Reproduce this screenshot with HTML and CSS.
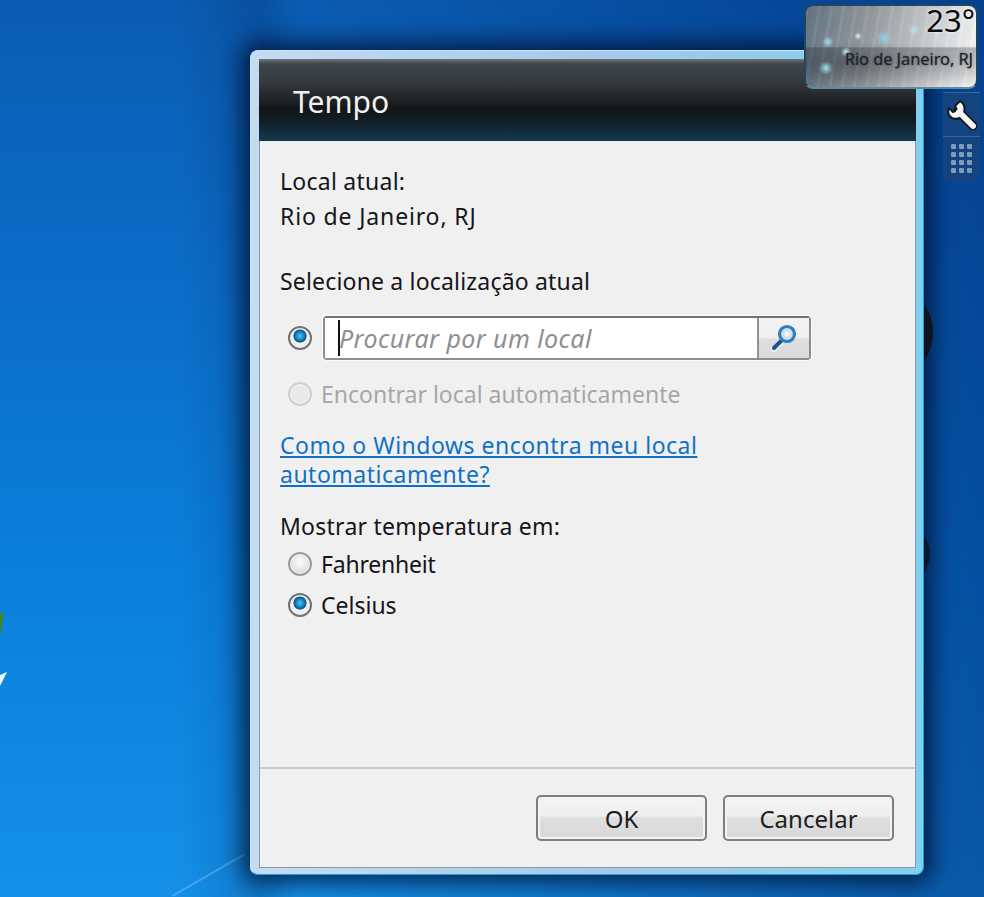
FILE: index.html
```html
<!DOCTYPE html>
<html lang="pt-BR">
<head>
<meta charset="utf-8">
<title>Tempo</title>
<link rel="stylesheet" href="styles.css">
</head>
<body>
<main class="desktop">
  <div class="streak"></div>
  <svg class="logo-bits" width="12" height="90" viewBox="0 0 12 90">
    <path d="M0 8 L4 2 L1 24 L0 26Z" fill="#3f8a12"/>
    <path d="M0 67 L7 64 L0 78Z" fill="#f4fafe"/>
  </svg>
  <div class="orb orb-a"></div>
  <div class="orb orb-b"></div>

  <section class="dialog">
    <div class="dialog-inner">
      <header class="dialog-head"><h1 class="dialog-title">Tempo</h1></header>
      <div class="dialog-body">
        <p class="line line-current">Local atual:</p>
        <p class="line line-city">Rio de Janeiro, RJ</p>
        <p class="line line-select">Selecione a localização atual</p>
        <div class="search-row">
          <span class="radio radio-on"></span>
          <div class="search">
            <div class="search-field"><span class="caret"></span><span class="placeholder">Procurar por um local</span></div>
            <div class="search-btn">
              <svg width="30" height="30" viewBox="0 0 30 30">
                <path d="M5 26 L13 18" stroke="#fff" stroke-width="6" stroke-linecap="round" opacity=".7"/>
                <path d="M5 25 L13 17" stroke="#1d4f93" stroke-width="4" stroke-linecap="round"/>
                <circle cx="18" cy="11" r="7.5" fill="#d5dfe8" stroke="#2f7fc0" stroke-width="3.2"/>
                <circle cx="18" cy="11" r="2.5" fill="#f3f6f9"/>
              </svg>
            </div>
          </div>
        </div>
        <div class="option option-auto"><span class="radio radio-off"></span><span class="label-off">Encontrar local automaticamente</span></div>
        <a class="help" href="#">Como o Windows encontra meu local<br>automaticamente?</a>
        <p class="line line-temp">Mostrar temperatura em:</p>
        <div class="option option-f"><span class="radio"></span><span class="label-f">Fahrenheit</span></div>
        <div class="option option-c"><span class="radio radio-on"></span><span>Celsius</span></div>
      </div>
      <footer class="dialog-foot">
        <button class="btn" type="button">OK</button>
        <button class="btn" type="button">Cancelar</button>
      </footer>
    </div>
  </section>

  <aside class="gadget">
    <div class="gadget-dots"></div>
    <div class="gadget-temp">23°</div>
    <div class="gadget-city">Rio de Janeiro, RJ</div>
  </aside>

  <aside class="tools">
    <div class="tool tool-wrench">
      <svg width="32" height="32" viewBox="0 0 32 32">
        <path d="M12 12 L27 27" stroke="#15181c" stroke-width="9" stroke-linecap="round"/>
        <path d="M14 2 L9 7 L11 11 L7 13 L3 9 C0 16 6 22 14 19 C20 15 20 5 14 2Z" fill="#f5f5f5" stroke="#15181c" stroke-width="2" stroke-linejoin="round"/>
        <path d="M13 13 L27 27" stroke="#f5f5f5" stroke-width="6" stroke-linecap="round"/>
      </svg>
    </div>
    <div class="tool tool-grid">
      <span></span><span></span><span></span>
      <span></span><span></span><span></span>
      <span></span><span></span><span></span>
      <span></span><span></span><span></span>
    </div>
  </aside>
</main>
</body>
</html>
```
FILE: styles.css
```css
* { box-sizing: border-box; }
html, body { margin: 0; padding: 0; height: 100%; }
body { overflow: hidden; }
.desktop {
  position: relative;
  width: 984px;
  height: 897px;
  overflow: hidden;
  font-family: "Noto Sans", "Open Sans", sans-serif;
  background:
    linear-gradient(90deg, rgba(0,0,0,0) 0, rgba(0,0,0,0) 180px, rgba(0,20,60,.18) 260px, rgba(0,0,0,0) 300px),
    linear-gradient(90deg, rgba(0,30,90,0) 30%, rgba(0,40,110,.55) 100%),
    linear-gradient(180deg, #0a5cb2 0, #0b6cc6 30%, #0a80dc 65%, #1490e8 100%);
}
.streak {
  position: absolute;
  left: 172px; top: 895px;
  width: 84px; height: 1.5px;
  background: rgba(160,210,250,.35);
  transform: rotate(-30deg);
  transform-origin: left top;
}
.logo-bits { position: absolute; left: 0; top: 608px; }
.orb { position: absolute; background: #1b1c1f; border-radius: 50%; }
.orb-a { left: 880px; top: 295px; width: 53px; height: 75px; }
.orb-b { left: 900px; top: 532px; width: 30px; height: 44px; background: #14243c; }

.dialog {
  position: absolute;
  left: 250px; top: 50px;
  width: 674px; height: 825px;
  padding: 8px 7px 6px 8px;
  border-radius: 8px;
  background: linear-gradient(90deg, #c3dcf3 0, #a7c9ea 50%, #7fd0f0 100%);
  border: 1px solid #cfe3f5;
  border-right-color: #2aa0cf;
  border-bottom-color: #2f9cd0;
  box-shadow: 0 0 22px 8px rgba(0,12,40,.75);
}
.dialog-inner {
  height: 100%;
  display: flex;
  flex-direction: column;
  background: #f0f0f0;
  border: 1px solid #8b99a6;
  border-top: 0;
}
.dialog-head {
  height: 82px;
  flex: none;
  margin: 0 -1px;
  padding: 28px 0 0 34px;
  background: linear-gradient(180deg, #6f7579 0, #3f454a 6%, #33383c 30%, #1f2326 50%, #121517 60%, #112029 78%, #143a50 100%);
}
.dialog-title {
  margin: 0;
  font-size: 30px;
  line-height: 30px;
  font-weight: 400;
  color: #f1f1f1;
}
.dialog-body {
  flex: 1;
  padding: 25px 0 0 20px;
  color: #15151a;
  font-size: 23px;
}
.line { margin: 0; line-height: 30px; }
.line-current { letter-spacing: .25px; }
.line-city { margin-top: 5px; letter-spacing: .85px; }
.line-select { margin-top: 35px; letter-spacing: .18px; }
.search-row {
  display: flex;
  align-items: center;
  gap: 11px;
  margin: 20px 0 0 8px;
}
.radio {
  flex: none;
  display: block;
  width: 24px; height: 24px;
  border-radius: 50%;
  border: 2px solid #9a9da0;
  background: radial-gradient(circle at 50% 40%, #fdfdfd 0, #e4e4e4 55%, #c4c4c4 100%);
  box-shadow: inset 0 0 0 1px #f6f6f6;
}
.radio-on {
  border-color: #6f7377;
  background: radial-gradient(circle at 50% 40%, #56c4ee 0, #0f7ec0 28%, #0d4f84 40%, #f2f2f2 44%, #e6e6e6 100%);
}
.radio-off { border-color: #cfcfcf; background: #e9e9e9; }
.search {
  display: flex;
  width: 488px; height: 44px;
  border: 2px solid #8a8e92;
  border-top-color: #707478;
  border-radius: 3px;
  outline: 1px solid #fbfbfb;
}
.search-field {
  flex: 1;
  display: flex;
  align-items: center;
  padding-left: 13px;
  background: #fff;
  border-right: 2px solid #8f9296;
}
.caret { width: 2px; height: 36px; background: #101018; margin-right: -1px; }
.placeholder { font-style: italic; color: #8d8f94; font-size: 25px; letter-spacing: .42px; }
.search-btn {
  width: 50px;
  display: flex;
  align-items: center;
  justify-content: center;
  background: linear-gradient(180deg, #f4f4f4 0, #eeeeee 50%, #dedede 52%, #dadada 100%);
}
.option { display: flex; align-items: center; gap: 9px; line-height: 30px; margin-left: 8px; }
.option-auto { margin-top: 19px; }
.label-off { color: #a6a7a9; }
.label-f { letter-spacing: -.2px; }
.option-f { margin-top: 8px; }
.option-c { margin-top: 11px; }
.help {
  display: block;
  margin-top: 22px;
  color: #1070c8;
  line-height: 29px;
  letter-spacing: .5px;
  text-decoration: underline;
}
.line-temp { margin-top: 22px; letter-spacing: .25px; }
.dialog-foot {
  flex: none;
  height: 100px;
  display: flex;
  justify-content: flex-end;
  gap: 16px;
  padding: 26px 21px 0 0;
  border-top: 2px solid #c9c9c9;
}
.btn {
  width: 171px; height: 46px;
  border: 2px solid #7c7f82;
  border-radius: 5px;
  background: linear-gradient(180deg, #f4f4f4 0, #eeeeee 44%, #dedede 50%, #d8d8d8 100%);
  box-shadow: inset 0 0 0 2px #f3f3f3;
  font: 400 24px "Noto Sans", sans-serif;
  color: #1d1d1d;
  padding: 0;
}

.gadget {
  position: absolute;
  left: 804px; top: 4px;
  width: 174px; height: 85px;
  border-radius: 9px;
  border: 2px solid #22465f;
  border-bottom-color: #5e8aa6;
  background:
    repeating-linear-gradient(100deg, rgba(255,255,255,.05) 0 3px, rgba(0,0,0,.025) 3px 12px),
    linear-gradient(100deg, rgba(90,110,125,.85) 0, rgba(140,145,150,.6) 35%, rgba(255,255,255,.95) 100%),
    linear-gradient(180deg, #9aa0a6 0, #a8adb1 45%, #5a5f63 70%, #8b9094 100%);
}
.gadget-dots {
  position: absolute; inset: 0;
  border-radius: 7px;
  background:
    radial-gradient(circle at 22px 36px, #9fdcef 0, rgba(159,220,239,0) 6px),
    radial-gradient(circle at 40px 46px, #c8f0f8 0, rgba(200,240,248,0) 5px),
    radial-gradient(circle at 20px 62px, #9fe0ef 0, rgba(159,224,239,0) 7px),
    radial-gradient(circle at 52px 30px, #d4f4fa 0, rgba(212,244,250,0) 4px),
    radial-gradient(circle at 78px 32px, #8fd0e4 0, rgba(143,208,228,0) 8px),
    radial-gradient(circle at 108px 24px, #aee2ef 0, rgba(174,226,239,0) 6px),
    linear-gradient(180deg, rgba(0,0,0,0) 0, rgba(0,0,0,0) 50%, rgba(30,40,50,.3) 52%, rgba(0,0,0,.15) 80%, rgba(0,0,0,0) 100%);
}
.gadget-temp {
  position: absolute;
  right: 1px; top: -2px;
  font-size: 31px; line-height: 32px;
  color: #0c0c0c;
  text-shadow: 0 0 3px #fff;
}
.gadget-city {
  position: absolute;
  right: 3px; top: 42px;
  font-size: 16.5px; line-height: 22px;
  color: #1e2226;
  white-space: nowrap;
  letter-spacing: -.1px;
  text-shadow: 0 0 2px rgba(30,34,38,.6);
}
.tools {
  position: absolute;
  left: 943px; top: 92px;
  width: 37px; height: 90px;
  border-radius: 0 0 6px 6px;
  background: #14447f;
  display: flex;
  flex-direction: column;
}
.tool-wrench {
  height: 45px;
  padding-left: 3px;
  display: flex;
  align-items: center;
  border-top: 1px solid #3d6593;
  border-bottom: 1px solid #3d6593;
}
.tool-grid {
  padding-top: 7px;
  display: grid;
  grid-template-columns: repeat(3, 5px);
  grid-auto-rows: 5px;
  gap: 3px;
  justify-content: center;
  align-content: start;
}
.tool-grid span { background: #7f9aba; border-radius: 1px; }
```
